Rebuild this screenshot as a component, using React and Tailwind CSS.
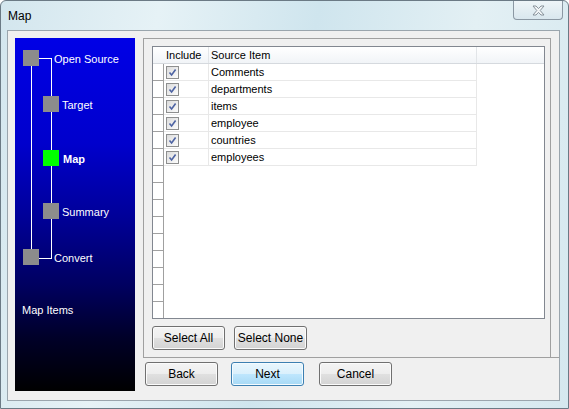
import React from 'react';

// source items shown in the map grid
const items = ['Comments', 'departments', 'items', 'employee', 'countries', 'employees'];

const btn =
  'h-[24px] w-[73px] rounded-[3px] border border-[#707070] bg-[linear-gradient(to_bottom,#f4f4f4_0%,#ededed_50%,#e0e0e0_51%,#d3d3d3_100%)] text-[12px] text-black shadow-[inset_0_0_0_1px_#fbfbfb]';
const btnPrimary =
  'h-[24px] w-[73px] rounded-[3px] border border-[#3c7fb1] bg-[linear-gradient(to_bottom,#eaf6fd_0%,#d9f0fc_50%,#bee6fd_51%,#a7d9f5_100%)] text-[12px] text-black shadow-[inset_0_0_0_1px_#f4fbff]';

function Check() {
  return (
    <span className="flex h-[13px] w-[13px] items-center justify-center border border-[#8e8f8f] bg-[linear-gradient(135deg,#dcdcdc,#fcfcfc)]">
      <svg width="9" height="9" viewBox="0 0 9 9">
        <path d="M1.5 4.5 L3.6 7 L7.6 1.5" fill="none" stroke="#4d63a3" strokeWidth="1.6" />
      </svg>
    </span>
  );
}

function Step({ x, y, label, lx, green, bold }) {
  return (
    <>
      <div
        className={`absolute h-[16px] w-[16px] ${green ? 'bg-[#00ff00]' : 'bg-[#8c8c8c]'}`}
        style={{ left: x, top: y }}
      />
      <span
        className={`absolute text-[11px] leading-[14px] text-white ${bold ? 'font-bold' : ''}`}
        style={{ left: lx, top: y + 2 }}
      >
        {label}
      </span>
    </>
  );
}

export default function App() {
  return (
    <div className="h-[409px] w-[569px] overflow-hidden rounded-t-[6px] border border-[#6b7a85] bg-[linear-gradient(100deg,#d3e6ee_0%,#e6f2f6_25%,#cfe5ee_50%,#e3f0f4_75%,#d5e8ef_100%)] font-['Liberation_Sans',sans-serif]">
      {/* 标题栏 */}
      <div className="flex h-[29px] items-start justify-between">
        <span className="ml-[7px] mt-[6px] text-[12px] text-black">Map</span>
        <div className="mr-[5px] flex h-[19px] w-[50px] items-center justify-center rounded-b-[4px] border border-t-0 border-[#8b98a3] bg-[linear-gradient(to_bottom,#eef5f8,#d9e7ee)]">
          <svg width="13" height="11" viewBox="0 0 13 11">
            <path
              d="M1 1 H4 L6.5 3.6 L9 1 H12 L8.2 5.5 L12 10 H9 L6.5 7.4 L4 10 H1 L4.8 5.5 Z"
              fill="#f4f7f9"
              stroke="#7d8891"
              strokeWidth="0.9"
            />
          </svg>
        </div>
      </div>

      {/* 客户区 */}
      <div className="ml-[6px] flex h-[371px] w-[553px] border border-[#9aa5ad] bg-[#f0f0f0] pl-[7px] pt-[7px]">
        {/* 左侧步骤 */}
        <div className="relative h-[353px] w-[120px] bg-[linear-gradient(to_bottom,#0000e6_0%,#0000cc_30%,#00009a_50%,#000060_70%,#000028_85%,#000000_100%)]">
          <div className="absolute left-[24px] top-[20px] h-px w-[12px] bg-white" />
          <div className="absolute left-[36px] top-[20px] h-[201px] w-px bg-white" />
          <div className="absolute left-[16px] top-[28px] h-[184px] w-px bg-white" />
          <div className="absolute left-[24px] top-[220px] h-px w-[12px] bg-white" />
          <Step x={8} y={12} label="Open Source" lx={39} />
          <Step x={28} y={58} label="Target" lx={47} />
          <Step x={28} y={112} label="Map" lx={48} green bold />
          <Step x={28} y={165} label="Summary" lx={47} />
          <Step x={8} y={211} label="Convert" lx={39} />
          <span className="absolute left-[7px] top-[264px] text-[11px] text-white">Map Items</span>
        </div>

        {/* 右侧内容 */}
        <div className="ml-[8px] flex w-[416px] flex-col">
          <div className="h-[320px] border-b border-[#a0a0a0]">
            <div className="h-full w-[408px] border-l border-r border-t border-[#a0a0a0] pl-[8px] pt-[7px]">
              <div className="flex h-[273px] w-[393px] flex-col overflow-hidden border border-[#828790] bg-white text-[11px] text-black">
                <div className="flex h-[17px] shrink-0 border-b border-[#d5d9de] bg-[linear-gradient(to_bottom,#ffffff,#f1f4f7)]">
                  <div className="w-[11px]" />
                  <div className="flex w-[45px] items-center border-r border-[#e2e5e8] pl-[2px]">Include</div>
                  <div className="flex w-[268px] items-center border-r border-[#e2e5e8] pl-[2px]">Source Item</div>
                  <div className="flex-1" />
                </div>
                <div className="flex flex-1">
                  <div className="flex w-[11px] flex-col border-r border-[#a0a0a0]">
                    {Array.from({ length: 16 }).map((_, i) => (
                      <div key={i} className="h-[17px] shrink-0 border-b border-[#a0a0a0]" />
                    ))}
                  </div>
                  <div className="flex flex-col">
                    {items.map((name) => (
                      <div key={name} className="flex h-[17px] border-b border-[#e8e8e8]">
                        <div className="flex w-[45px] items-center border-r border-[#e8e8e8] pl-[2px]">
                          <Check />
                        </div>
                        <div className="flex w-[268px] items-center border-r border-[#e8e8e8] pl-[2px]">{name}</div>
                      </div>
                    ))}
                  </div>
                </div>
              </div>
              <div className="mt-[7px] flex gap-[9px]">
                <button className={btn}>Select All</button>
                <button className={btn}>Select None</button>
              </div>
            </div>
          </div>
          <div className="ml-[2px] mt-[4px] flex">
            <button className={btn}>Back</button>
            <button className={`${btnPrimary} ml-[13px]`}>Next</button>
            <button className={`${btn} ml-[15px]`}>Cancel</button>
          </div>
        </div>
      </div>
    </div>
  );
}
